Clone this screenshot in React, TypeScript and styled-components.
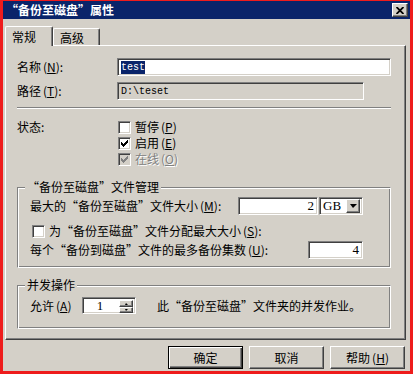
import React from 'react'
import styled, { createGlobalStyle, css } from 'styled-components'

const FACE = '#d4d0c8'
const NAVY = '#0a246a'

const GlobalStyle = createGlobalStyle`
  html, body {
    margin: 0;
    padding: 0;
    background: #fff;
  }
  body {
    font-family: "Noto Sans CJK SC", "Liberation Sans", sans-serif;
    font-size: 12px;
    color: #000;
  }
`

const sunken = css`
  box-sizing: border-box;
  border: 1px solid;
  border-color: #808080 #fff #fff #808080;
  box-shadow: inset 1px 1px 0 #404040, inset -1px -1px 0 ${FACE};
`

const raised = css`
  box-sizing: border-box;
  border: 1px solid;
  border-color: #fff #404040 #404040 #fff;
  box-shadow: inset -1px -1px 0 #808080;
`

const etched = css`
  box-sizing: border-box;
  border: 1px solid;
  border-color: #808080 #fff #fff #808080;
  box-shadow: inset 1px 1px 0 #fff, inset -1px -1px 0 #808080;
`

const Window = styled.div`
  width: 413px;
  height: 374px;
  box-sizing: border-box;
  border: solid #ee1c1c;
  border-width: 1px 3px 3px 3px;
  background: ${FACE};
  display: flex;
  flex-direction: column;
`

const TitleBar = styled.div`
  height: 18px;
  background: ${NAVY};
  display: flex;
  align-items: center;
  justify-content: space-between;
  padding: 0 2px 0 3px;
`

const Title = styled.span`
  color: #fff;
  font-weight: bold;
  font-size: 12px;
  line-height: 18px;
`

const CloseBtn = styled.div`
  ${raised};
  width: 16px;
  height: 14px;
  background: ${FACE};
  display: flex;
  align-items: center;
  justify-content: center;
`

const Body = styled.div`
  padding: 7px 4px 0 2px;
  display: flex;
  flex-direction: column;
`

const TabStrip = styled.div`
  display: flex;
  align-items: flex-end;
  height: 19px;
`

const Tab = styled.div<{ $active?: boolean }>`
  box-sizing: border-box;
  border: 1px solid;
  border-color: #fff #404040 transparent #fff;
  border-bottom: none;
  border-radius: 2px 2px 0 0;
  box-shadow: inset -1px 0 0 #808080;
  background: ${FACE};
  padding-left: 6px;
  line-height: 14px;
  display: flex;
  align-items: center;
  width: ${p => (p.$active ? 48 : 47)}px;
  height: ${p => (p.$active ? 20 : 17)}px;
  margin-bottom: ${p => (p.$active ? -1 : 0)}px;
  padding-top: ${p => (p.$active ? 0 : 2)}px;
  position: relative;
  z-index: ${p => (p.$active ? 1 : 0)};
`

const Panel = styled.div`
  ${raised};
  width: 401px;
  height: 295px;
  padding: 12px 14px 0 11px;
  display: flex;
  flex-direction: column;
`

const FieldGrid = styled.div`
  display: grid;
  grid-template-columns: 100px 1fr;
  row-gap: 6px;
  align-items: center;
`

const Label = styled.span<{ $disabled?: boolean }>`
  line-height: 14px;
  white-space: nowrap;
  color: ${p => (p.$disabled ? '#808080' : '#000')};
  text-shadow: ${p => (p.$disabled ? '1px 1px 0 #fff' : 'none')};
`

const KeyMark = styled.span`
  margin-left: 2px;
  & u {
    text-decoration: underline;
    text-underline-offset: 1px;
  }
`

const TextBox = styled.div<{ $width?: number; $readOnly?: boolean; $align?: string }>`
  ${sunken};
  width: ${p => (p.$width ? `${p.$width}px` : '100%')};
  height: 18px;
  background: ${p => (p.$readOnly ? FACE : '#fff')};
  padding: 0 3px;
  display: flex;
  align-items: center;
  justify-content: ${p => p.$align || 'flex-start'};
  font-family: "Liberation Mono", monospace;
  font-size: 10px;
`

const Selected = styled.span`
  background: ${NAVY};
  color: #fff;
  line-height: 13px;
`

const NumText = styled.span`
  font-family: "Liberation Serif", serif;
  font-size: 13px;
  line-height: 14px;
`

const Separator = styled.div`
  margin-top: 7px;
  border-top: 1px solid #808080;
  border-bottom: 1px solid #fff;
`

const StatusGrid = styled.div`
  display: grid;
  grid-template-columns: 100px 1fr;
  margin-top: 10px;
  align-items: start;
`

const StatusLabel = styled(Label)`
  line-height: 16px;
`

const CheckList = styled.div`
  display: flex;
  flex-direction: column;
  padding-left: 1px;
`

const CheckRow = styled.div<{ $indent?: number }>`
  display: flex;
  align-items: center;
  gap: 4px;
  height: 16px;
  margin-left: ${p => p.$indent || 0}px;
`

const CheckBox = styled.div<{ $disabled?: boolean }>`
  ${sunken};
  width: 13px;
  height: 13px;
  background: ${p => (p.$disabled ? FACE : '#fff')};
  display: flex;
  align-items: center;
  justify-content: center;
  flex: none;
`

const Group = styled.div<{ $top: number; $bottom: number }>`
  ${etched};
  margin-top: ${p => p.$top}px;
  padding: 0 27px ${p => p.$bottom}px 12px;
  display: flex;
  flex-direction: column;
`

const Legend = styled.span`
  align-self: flex-start;
  margin: -8px 0 0 -5px;
  padding: 0 2px;
  background: ${FACE};
  line-height: 14px;
  white-space: nowrap;
`

const GroupRow = styled.div<{ $top: number; $height: number }>`
  display: flex;
  align-items: center;
  justify-content: space-between;
  margin-top: ${p => p.$top}px;
  height: ${p => p.$height}px;
`

const Controls = styled.div`
  display: flex;
  gap: 1px;
`

const Combo = styled.div`
  ${sunken};
  width: 44px;
  height: 18px;
  background: #fff;
  padding: 2px 2px 2px 3px;
  display: flex;
  align-items: center;
  justify-content: space-between;
`

const ArrowBtn = styled.div<{ $w: number; $h: number }>`
  ${raised};
  width: ${p => p.$w}px;
  height: ${p => p.$h}px;
  background: ${FACE};
  display: flex;
  align-items: center;
  justify-content: center;
  flex: none;
`

const ConcurrentRow = styled.div`
  display: flex;
  align-items: center;
  margin-top: 5px;
  height: 17px;
`

const AllowLabel = styled(Label)`
  width: 52px;
`

const Spinner = styled.div`
  ${sunken};
  width: 54px;
  height: 17px;
  background: #fff;
  padding: 2px;
  display: flex;
  align-items: stretch;
`

const SpinValue = styled.div`
  flex: 1;
  display: flex;
  align-items: center;
  justify-content: center;
  padding-right: 4px;
`

const SpinButtons = styled.div`
  display: flex;
  flex-direction: column;
`

const Note = styled(Label)`
  margin-left: 21px;
`

const ButtonRow = styled.div`
  display: flex;
  justify-content: flex-end;
  gap: 6px;
  margin-top: 6px;
  padding-right: 1px;
`

const Button = styled.div<{ $default?: boolean }>`
  box-sizing: border-box;
  width: 75px;
  height: 23px;
  background: ${FACE};
  display: flex;
  align-items: center;
  justify-content: center;
  line-height: 14px;
  border: 1px solid;
  ${p =>
    p.$default
      ? css`
          border-color: #000;
          box-shadow: inset 1px 1px 0 #fff, inset -1px -1px 0 #404040, inset -2px -2px 0 #808080;
        `
      : css`
          border-color: #fff #404040 #404040 #fff;
          box-shadow: inset -1px -1px 0 #808080;
        `}
`

const Key = ({ k }: { k: string }) => (
  <KeyMark>
    (<u>{k}</u>)
  </KeyMark>
)

const CheckMark = ({ color }: { color: string }) => (
  <svg width="7" height="7" viewBox="0 0 7 7" shapeRendering="crispEdges">
    <path d="M0 2h1v1h1v1h1v-1h1v-1h1v-1h1v-1h1v3h-1v1h-1v1h-1v1h-1v1h-1v-1h-1v-1h-1v-1h-1z" fill={color} />
  </svg>
)

const Triangle = ({ up, size }: { up?: boolean; size: number }) => (
  <svg width={size * 2 - 1} height={size} viewBox={`0 0 ${size * 2 - 1} ${size}`}>
    <polygon
      points={up ? `${size - 1},0 ${size * 2 - 1},${size} 0,${size}` : `0,0 ${size * 2 - 1},0 ${size - 1},${size}`}
      fill="#000"
    />
  </svg>
)

const App = () => {
  return (
    <>
      <GlobalStyle />
      <Window>
        <TitleBar>
          <Title>“备份至磁盘”属性</Title>
          <CloseBtn>
            <svg width="8" height="7" viewBox="0 0 8 7">
              <path d="M0.5 0 L7.5 7 M7.5 0 L0.5 7" stroke="#000" strokeWidth="1.8" />
            </svg>
          </CloseBtn>
        </TitleBar>
        <Body>
          <TabStrip>
            <Tab $active>常规</Tab>
            <Tab>高级</Tab>
          </TabStrip>
          <Panel>
            <FieldGrid>
              <Label>
                名称<Key k="N" />:
              </Label>
              <TextBox>
                <Selected>test</Selected>
              </TextBox>
              <Label>
                路径<Key k="T" />:
              </Label>
              <TextBox $width={247} $readOnly>
                D:\teset
              </TextBox>
            </FieldGrid>
            <Separator />
            <StatusGrid>
              <StatusLabel>状态:</StatusLabel>
              <CheckList>
                <CheckRow>
                  <CheckBox />
                  <Label>
                    暂停<Key k="P" />
                  </Label>
                </CheckRow>
                <CheckRow>
                  <CheckBox>
                    <CheckMark color="#000" />
                  </CheckBox>
                  <Label>
                    启用<Key k="E" />
                  </Label>
                </CheckRow>
                <CheckRow>
                  <CheckBox $disabled>
                    <CheckMark color="#808080" />
                  </CheckBox>
                  <Label $disabled>
                    在线<Key k="O" />
                  </Label>
                </CheckRow>
              </CheckList>
            </StatusGrid>

            <Group $top={20} $bottom={8}>
              <Legend>“备份至磁盘”文件管理</Legend>
              <GroupRow $top={3} $height={18}>
                <Label>
                  最大的“备份至磁盘”文件大小<Key k="M" />:
                </Label>
                <Controls>
                  <TextBox $width={80} $align="flex-end">
                    <NumText>2</NumText>
                  </TextBox>
                  <Combo>
                    <NumText>GB</NumText>
                    <ArrowBtn $w={14} $h={14}>
                      <Triangle size={4} />
                    </ArrowBtn>
                  </Combo>
                </Controls>
              </GroupRow>
              <GroupRow $top={8} $height={16}>
                <CheckRow $indent={2}>
                  <CheckBox />
                  <Label>
                    为“备份至磁盘”文件分配最大大小<Key k="S" />:
                  </Label>
                </CheckRow>
              </GroupRow>
              <GroupRow $top={2} $height={18}>
                <Label>
                  每个“备份到磁盘”文件的最多备份集数<Key k="U" />:
                </Label>
                <TextBox $width={55} $align="flex-end">
                  <NumText>4</NumText>
                </TextBox>
              </GroupRow>
            </Group>

            <Group $top={17} $bottom={14}>
              <Legend>并发操作</Legend>
              <ConcurrentRow>
                <AllowLabel>
                  允许<Key k="A" />
                </AllowLabel>
                <Spinner>
                  <SpinValue>
                    <NumText>1</NumText>
                  </SpinValue>
                  <SpinButtons>
                    <ArrowBtn $w={14} $h={7}>
                      <Triangle up size={2} />
                    </ArrowBtn>
                    <ArrowBtn $w={14} $h={6}>
                      <Triangle size={2} />
                    </ArrowBtn>
                  </SpinButtons>
                </Spinner>
                <Note>此“备份至磁盘”文件夹的并发作业。</Note>
              </ConcurrentRow>
            </Group>
          </Panel>
          <ButtonRow>
            <Button $default>确定</Button>
            <Button>取消</Button>
            <Button>
              帮助<Key k="H" />
            </Button>
          </ButtonRow>
        </Body>
      </Window>
    </>
  )
}

export default App
